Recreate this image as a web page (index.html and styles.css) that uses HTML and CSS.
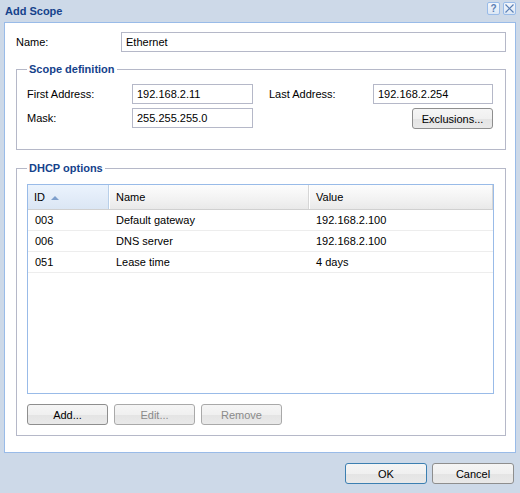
FILE: index.html
```html
<!DOCTYPE html>
<html lang="en">
<head>
    <meta charset="UTF-8">
    <title>Add Scope</title>
    <link rel="stylesheet" href="styles.css">
</head>
<body>
    <div class="window">
        <div class="titlebar">
            <span class="title">Add Scope</span>
            <div class="tools">
                <span class="tool tool-help">?</span>
                <span class="tool">
                    <svg width="9" height="9" viewBox="0 0 9 9"><path d="M0.5 0.5 L8.5 8.5 M8.5 0.5 L0.5 8.5" stroke="#5a7fb5" stroke-width="1.2" fill="none"/></svg>
                </span>
            </div>
        </div>

        <div class="panel">
            <div class="name-row">
                <label class="lbl name-lbl">Name:</label>
                <input class="field name-field" type="text" value="Ethernet">
            </div>

            <fieldset class="box scope">
                <legend>Scope definition</legend>
                <div class="scope-grid">
                    <label class="lbl">First Address:</label>
                    <input class="field" type="text" value="192.168.2.11">
                    <span></span>
                    <label class="lbl">Last Address:</label>
                    <input class="field field-last" type="text" value="192.168.2.254">

                    <label class="lbl">Mask:</label>
                    <input class="field" type="text" value="255.255.255.0">
                    <span></span>
                    <span></span>
                    <div class="right"><button class="btn btn-excl">Exclusions...</button></div>
                </div>
            </fieldset>

            <fieldset class="box dhcp">
                <legend>DHCP options</legend>
                <div class="grid">
                    <div class="grid-head">
                        <div class="hcell col-id sorted">ID <span class="sort-arrow"></span></div>
                        <div class="hcell col-name">Name</div>
                        <div class="hcell col-value">Value</div>
                    </div>
                    <div class="grid-row">
                        <div class="cell col-id">003</div>
                        <div class="cell col-name">Default gateway</div>
                        <div class="cell col-value">192.168.2.100</div>
                    </div>
                    <div class="grid-row">
                        <div class="cell col-id">006</div>
                        <div class="cell col-name">DNS server</div>
                        <div class="cell col-value">192.168.2.100</div>
                    </div>
                    <div class="grid-row">
                        <div class="cell col-id">051</div>
                        <div class="cell col-name">Lease time</div>
                        <div class="cell col-value">4 days</div>
                    </div>
                </div>
                <div class="grid-buttons">
                    <button class="btn">Add...</button>
                    <button class="btn" disabled>Edit...</button>
                    <button class="btn" disabled>Remove</button>
                </div>
            </fieldset>
        </div>

        <div class="footer">
            <button class="btn btn-ok">OK</button>
            <button class="btn">Cancel</button>
        </div>
    </div>
</body>
</html>
```

FILE: styles.css
```css
/* window chrome */
body {
    margin: 0;
    background: #cdd9e8;
    font-family: "Liberation Sans", Arial, sans-serif;
    font-size: 11px;
    color: #000;
}
.window { width: 520px; height: 493px; }

.titlebar {
    height: 22px;
    display: flex;
    align-items: flex-start;
    justify-content: space-between;
    padding: 0 4px 0 5px;
    box-sizing: border-box;
}
.title {
    font-weight: bold;
    color: #15428b;
    line-height: 14px;
    margin-top: 4px;
}
.tools { display: flex; gap: 3px; margin-top: 2px; }
.tool {
    width: 13px;
    height: 13px;
    box-sizing: border-box;
    border: 1px solid #99bbe8;
    border-radius: 2px;
    background: linear-gradient(#f3f7fc, #dce7f5);
    display: flex;
    align-items: center;
    justify-content: center;
}
.tool-help {
    color: #5a7fb5;
    font-weight: bold;
    font-size: 10px;
    line-height: 11px;
}

.panel {
    margin: 0 4px;
    height: 431px;
    box-sizing: border-box;
    background: #fff;
    border: 1px solid #99bbe8;
    padding: 9px 9px 0 11px;
}

/* form bits */
.lbl { line-height: 20px; }
.field {
    height: 20px;
    box-sizing: border-box;
    border: 1px solid #b5b8c8;
    background: #fff;
    font: 11px "Liberation Sans", Arial, sans-serif;
    padding: 0 4px;
    margin: 0;
    outline: none;
}
.name-row { display: flex; }
.name-lbl { width: 105px; }
.name-field { width: 385px; }

.box {
    margin: 10px 0 0 0;
    border: 1px solid #b5b8c8;
    padding: 9px 11px 0 10px;
}
.box legend {
    color: #15428b;
    font-weight: bold;
    line-height: 14px;
    padding: 0 2px;
}
.scope { padding-top: 8px; padding-bottom: 21px; }
.dhcp { margin-top: 11px; padding-bottom: 10px; }

.scope-grid {
    display: grid;
    grid-template-columns: 105px 121px 16px 104px 120px;
    grid-auto-rows: 20px;
    row-gap: 4px;
}
.scope-grid .field { width: 121px; }
.scope-grid .field-last { width: 120px; }
.right { display: flex; justify-content: flex-end; }

/* buttons */
.btn {
    height: 21px;
    width: 81px;
    box-sizing: border-box;
    border: 1px solid #8e8e8e;
    border-radius: 3px;
    background: linear-gradient(#f5f5f5 0%, #f0f0f0 50%, #e4e4e4 51%, #e9e9e9 100%);
    font: 11px "Liberation Sans", Arial, sans-serif;
    color: #000;
    padding: 0;
    margin: 0;
}
.btn:disabled { color: #8a8a8a; border-color: #a9a9a9; }
.btn-excl { height: 21px; }
.btn-ok { border-color: #3c7fb1; }

/* grid */
.grid {
    height: 210px;
    border: 1px solid #99bbe8;
    box-sizing: border-box;
}
.grid-head {
    display: flex;
    height: 24px;
    background: linear-gradient(#fdfdfd, #f2f2f2 60%, #e9e9e9);
    border-bottom: 1px solid #d0d0d0;
}
.hcell {
    line-height: 24px;
    padding-left: 6px;
    box-sizing: border-box;
    border-right: 1px solid #d6d6d6;
    border-left: 1px solid #fff;
}
.hcell.sorted {
    background: linear-gradient(#ebf3fd, #dbe6f4);
    border-right: 1px solid #b8cfe9;
    border-left: none;
}
.sort-arrow {
    display: inline-block;
    width: 0;
    height: 0;
    border-left: 4px solid transparent;
    border-right: 4px solid transparent;
    border-bottom: 4px solid #7e9fcc;
    margin-left: 3px;
    vertical-align: 1px;
}
.col-id { width: 81px; }
.col-name { width: 200px; }
.col-value { flex: 1; }

.grid-row {
    display: flex;
    height: 21px;
    border-bottom: 1px solid #ededed;
    box-sizing: border-box;
}
.cell {
    line-height: 20px;
    padding-left: 7px;
    box-sizing: border-box;
}

.grid-buttons {
    display: flex;
    gap: 6px;
    margin-top: 10px;
}

.footer {
    display: flex;
    justify-content: flex-end;
    gap: 5px;
    padding: 10px 6px 0 0;
}
.footer .btn { width: 82px; height: 21px; }
```
